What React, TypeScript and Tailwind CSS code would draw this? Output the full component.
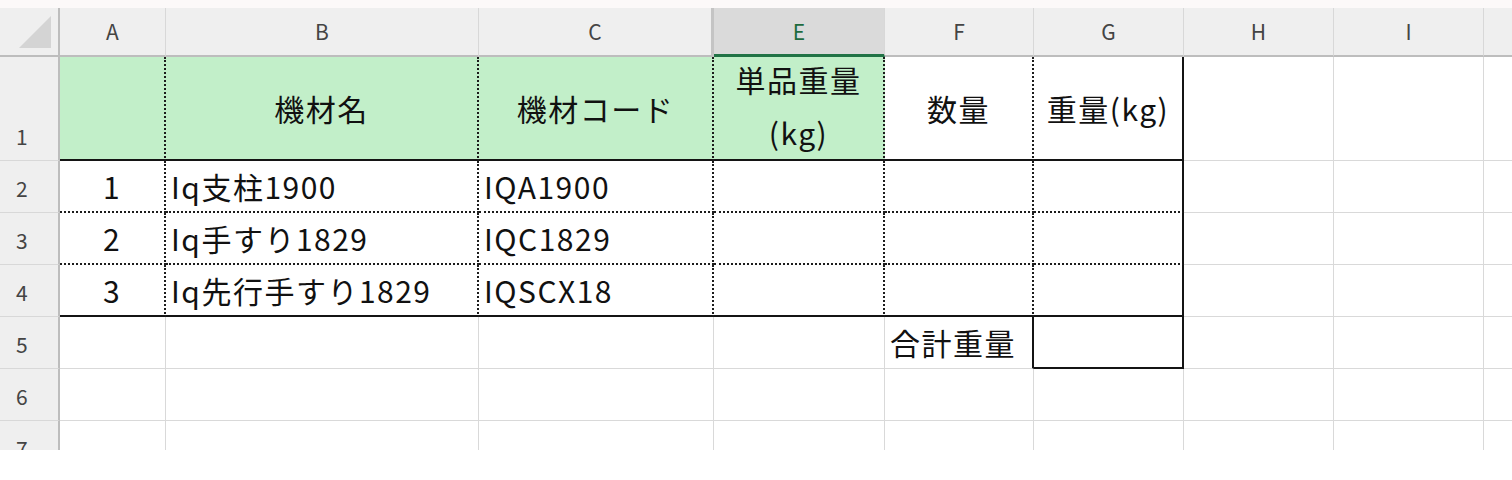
import React from 'react';

type Col = { key: string; w: string };

const COLS: Col[] = [
  { key: 'A', w: 'w-[106px]' },
  { key: 'B', w: 'w-[313px]' },
  { key: 'C', w: 'w-[235px]' },
  { key: 'E', w: 'w-[171px]' },
  { key: 'F', w: 'w-[149px]' },
  { key: 'G', w: 'w-[150px]' },
  { key: 'H', w: 'w-[150px]' },
  { key: 'I', w: 'w-[150px]' },
  { key: 'J', w: 'w-[150px]' },
];

// border presets for the right and bottom edge of a cell
const R = {
  grid: 'border-r border-r-[#d9d9d9]',
  dot: 'border-r-2 border-r-[#1c1c1c] [border-right-style:dotted]',
  solid: 'border-r-2 border-r-[#141414]',
};
const B = {
  grid: 'border-b border-b-[#d9d9d9]',
  dot: 'border-b-2 border-b-[#1c1c1c] [border-bottom-style:dotted]',
  solid: 'border-b-2 border-b-[#141414]',
};

type CellSpec = {
  text?: React.ReactNode;
  align?: 'left' | 'center';
  fill?: boolean;
  right?: keyof typeof R;
  bottom?: keyof typeof B;
};

type RowSpec = { num: number; h: string; cells: CellSpec[] };

const items = [
  { no: '1', name: 'Iq支柱1900', code: 'IQA1900' },
  { no: '2', name: 'Iq手すり1829', code: 'IQC1829' },
  { no: '3', name: 'Iq先行手すり1829', code: 'IQSCX18' },
];

const tableRow = (bottom: keyof typeof B, a?: string, b?: string, c?: string): CellSpec[] => [
  { text: a, align: 'center', right: 'dot', bottom },
  { text: b, right: 'dot', bottom },
  { text: c, right: 'dot', bottom },
  { right: 'dot', bottom },
  { right: 'dot', bottom },
  { right: 'solid', bottom },
];

const ROWS: RowSpec[] = [
  {
    num: 1,
    h: 'h-[104px]',
    cells: [
      { fill: true, right: 'dot', bottom: 'solid' },
      { text: '機材名', align: 'center', fill: true, right: 'dot', bottom: 'solid' },
      { text: '機材コード', align: 'center', fill: true, right: 'dot', bottom: 'solid' },
      {
        text: (
          <span className="block leading-[53px] -mt-[4px]">
            単品重量
            <br />
            (kg)
          </span>
        ),
        align: 'center',
        fill: true,
        right: 'dot',
        bottom: 'solid',
      },
      { text: '数量', align: 'center', right: 'dot', bottom: 'solid' },
      { text: '重量(kg)', align: 'center', right: 'solid', bottom: 'solid' },
    ],
  },
  ...items.map((it, i) => ({
    num: i + 2,
    h: 'h-[52px]',
    cells: tableRow(i === items.length - 1 ? 'solid' : 'dot', it.no, it.name, it.code),
  })),
  {
    num: 5,
    h: 'h-[52px]',
    cells: [{}, {}, {}, {}, { text: '合計重量', right: 'solid' }, { right: 'solid', bottom: 'solid' }],
  },
  { num: 6, h: 'h-[52px]', cells: [] },
  { num: 7, h: 'h-[52px]', cells: [] },
];

const Cell: React.FC<{ col: Col; spec: CellSpec }> = ({ col, spec }) => {
  const right = R[spec.right ?? 'grid'];
  const bottom = B[spec.bottom ?? 'grid'];
  const align = spec.align === 'center' ? 'justify-center text-center' : 'justify-start pl-[5px]';
  return (
    <div
      className={`${col.w} h-full shrink-0 flex items-center ${align} ${right} ${bottom} ${
        spec.fill ? 'bg-[#c2efc9]' : 'bg-white'
      } text-[30px] tracking-[1.5px] text-[#111] whitespace-nowrap overflow-visible`}
    >
      {spec.text}
    </div>
  );
};

const CornerCell = () => (
  <div className="w-[60px] h-full shrink-0 flex items-end justify-end pr-[7px] pb-[7px] border-r-2 border-r-[#bdbdbd] border-b-2 border-b-[#bdbdbd] bg-[#efefef]">
    <svg width="32" height="32" viewBox="0 0 32 32">
      <polygon points="32,0 32,32 0,32" fill="#d4d4d4" />
    </svg>
  </div>
);

export default function App() {
  return (
    <div className="w-[1512px] h-[480px] overflow-hidden bg-white font-['Noto_Sans_CJK_JP','Noto_Sans',sans-serif]">
      <div className="h-[8px] bg-[#fcf9f9]" />
      <div className="h-[442px] overflow-hidden">
        {/* column letters */}
        <div className="flex h-[49px]">
          <CornerCell />
          {COLS.map((c) => {
            const selected = c.key === 'E';
            return (
              <div
                key={c.key}
                className={`${c.w} h-full shrink-0 flex justify-center pt-[8px] text-[21px] ${
                  selected
                    ? 'bg-[#dadada] text-[#1e6b3e] border-b-[3px] border-b-[#217346]'
                    : 'bg-[#efefef] text-[#444] border-b-2 border-b-[#bdbdbd]'
                } ${c.key === 'C' ? 'border-r-[3px] border-r-[#c4c4c4]' : 'border-r border-r-[#d8d8d8]'}`}
              >
                {c.key === 'J' ? '' : c.key}
              </div>
            );
          })}
        </div>
        {ROWS.map((row) => (
          <div key={row.num} className={`flex ${row.h}`}>
            <div className="w-[60px] h-full shrink-0 flex items-end pl-[16px] pb-[11px] bg-[#efefef] border-r-2 border-r-[#bdbdbd] border-b border-b-[#d8d8d8] text-[21px] leading-[26px] text-[#444]">
              {row.num}
            </div>
            {COLS.map((c, i) => (
              <Cell key={c.key} col={c} spec={row.cells[i] ?? {}} />
            ))}
          </div>
        ))}
      </div>
      <div className="h-[30px] bg-white" />
    </div>
  );
}
